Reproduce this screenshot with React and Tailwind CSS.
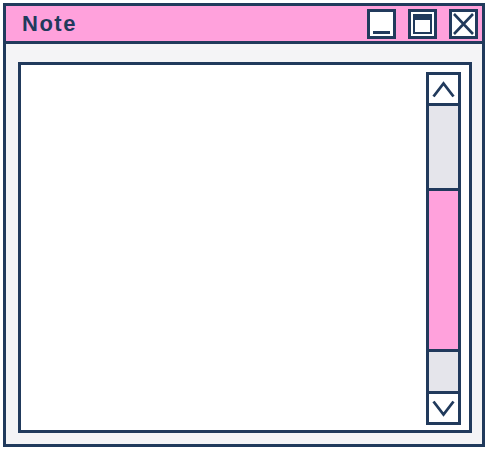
import React from 'react';

const NAVY = '#213a5c';

function TitleButton({ children }) {
  return (
    <div className="w-[29px] h-[30px] border-[3px] border-[#213a5c] bg-white relative">
      {children}
    </div>
  );
}

function Chevron({ up }) {
  return (
    <svg width="23" height="17" viewBox="0 0 23 17" fill="none">
      <path
        d={up ? 'M1.5 15.5 L11.5 2.5 L21.5 15.5' : 'M1.5 1.5 L11.5 14.5 L21.5 1.5'}
        stroke={NAVY}
        strokeWidth="2.8"
        strokeLinejoin="miter"
      />
    </svg>
  );
}

export default function App() {
  return (
    <div className="w-[486px] h-[451px] bg-white pt-[3px] pl-[3px]">
      <div className="w-[482px] h-[444px] border-[3px] border-[#213a5c] flex flex-col bg-[#f4f4f6]">
        {/* title bar */}
        <div className="h-[38px] shrink-0 bg-[#ffa1dc] border-b-[3px] border-[#213a5c] flex items-center justify-between pl-[16px] pr-[4px]">
          <span className="text-[22px] font-bold tracking-[1.5px] text-[#213a5c] leading-none font-['Liberation_Sans',sans-serif] mt-[1px]">
            Note
          </span>
          <div className="flex gap-[12px] mt-[1px]">
            <TitleButton>
              <div className="absolute left-[3px] right-[3px] bottom-[2px] h-[3px] bg-[#213a5c]" />
            </TitleButton>
            <TitleButton>
              <div className="absolute left-[2px] right-[2px] top-[2px] bottom-[2px] border-[2px] border-t-[6px] border-[#213a5c]" />
            </TitleButton>
            <TitleButton>
              <svg width="23" height="24" viewBox="0 0 23 24" className="absolute left-0 top-0">
                <path d="M2 2 L21 22 M21 2 L2 22" stroke={NAVY} strokeWidth="2.6" />
              </svg>
            </TitleButton>
          </div>
        </div>
        {/* content */}
        <div className="flex-1 pt-[18px] pb-[11px] pl-[12px] pr-[10px] flex">
          <div className="flex-1 border-[3px] border-[#213a5c] bg-white flex justify-end pt-[7px] pb-[5px] pr-[8px]">
            <div className="w-[35px] border-[3px] border-[#213a5c] flex flex-col">
              <div className="h-[31px] shrink-0 bg-white flex items-center justify-center border-b-[3px] border-[#213a5c]">
                <Chevron up />
              </div>
              <div className="h-[82px] shrink-0 bg-[#e5e5eb]" />
              <div className="flex-1 bg-[#ffa1dc] border-y-[3px] border-[#213a5c]" />
              <div className="h-[39px] shrink-0 bg-[#e5e5eb]" />
              <div className="h-[31px] shrink-0 bg-white flex items-center justify-center border-t-[3px] border-[#213a5c]">
                <Chevron />
              </div>
            </div>
          </div>
        </div>
      </div>
    </div>
  );
}
